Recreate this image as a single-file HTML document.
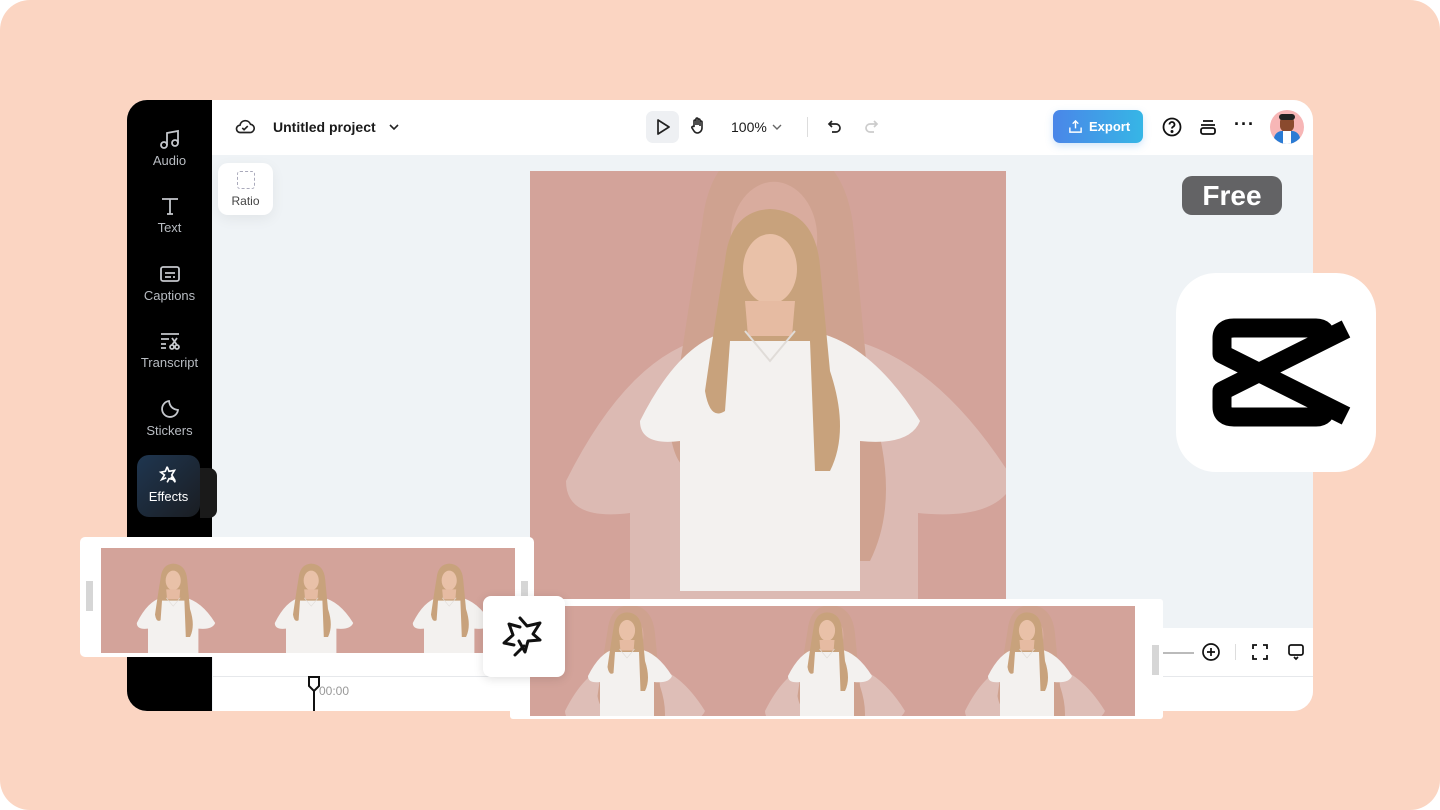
<!DOCTYPE html>
<html><head><meta charset="utf-8"><style>
*{margin:0;padding:0;box-sizing:border-box}
body{width:1440px;height:810px;background:#fff;font-family:"Liberation Sans",sans-serif;overflow:hidden;position:relative}
.bg{position:absolute;left:0;top:0;width:1440px;height:810px;background:#fbd5c2;border-radius:30px}
.abs{position:absolute}
.win{left:127px;top:100px;width:1186px;height:611px;border-radius:20px;background:#eff3f6;overflow:hidden}
.side{left:0;top:0;width:85px;height:611px;background:#000}
.top{left:85px;top:0;width:1101px;height:55px;background:#fff}
.si{position:absolute;left:0;width:85px;text-align:center;color:#b8bcc2;font-size:13px}
.si svg{display:block;margin:0 auto 2px}
</style></head><body>
<div class="bg"></div>
<svg width="0" height="0" style="position:absolute">
<defs>
<g id="fig">
<path d="M110 250 Q150 170 200 160 L280 160 Q340 170 390 250 Q380 275 330 270 L330 420 L150 420 L150 270 Q110 275 110 250Z" fill="#f3f1ef"/>
<path d="M195 90 Q200 40 240 38 Q285 40 290 95 L300 200 Q320 260 300 300 L285 300 L280 170 L200 170 L195 240 Q180 250 175 220 Q185 150 195 90Z" fill="#c8a27c"/>
<ellipse cx="240" cy="98" rx="27" ry="35" fill="#e9c1a8"/>
<path d="M215 130 L265 130 L262 165 L218 165Z" fill="#e6bba2"/>
<path d="M215 160 L240 190 L265 160" fill="none" stroke="#e0dcd8" stroke-width="2"/>
</g>
</defs></svg>

<div class="abs win">
  <div class="abs side">
    <div class="si" style="top:27px"><svg width="24" height="24" viewBox="0 0 24 24" fill="none" stroke="#c4c7cc" stroke-width="1.8"><path d="M9 18V6l11-2v12"/><circle cx="6" cy="18" r="3"/><circle cx="17" cy="16" r="3"/></svg>Audio</div>
    <div class="si" style="top:94px"><svg width="24" height="24" viewBox="0 0 24 24" fill="none" stroke="#c4c7cc" stroke-width="1.8"><path d="M4 5h16M12 5v15M9 20h6"/></svg>Text</div>
    <div class="si" style="top:162px"><svg width="24" height="24" viewBox="0 0 24 24" fill="none" stroke="#c4c7cc" stroke-width="1.8"><rect x="3" y="5" width="18" height="14" rx="2"/><path d="M7 11h10M7 15h6M15 15h2"/></svg>Captions</div>
    <div class="si" style="top:229px"><svg width="24" height="24" viewBox="0 0 24 24" fill="none" stroke="#c4c7cc" stroke-width="1.8"><path d="M3 5h18M3 10h8M3 15h5M3 19h5"/><circle cx="14" cy="18" r="2"/><circle cx="19" cy="18" r="2"/><path d="M14 9l5 7M19 9l-5 7"/></svg>Transcript</div>
    <div class="si" style="top:297px"><svg width="24" height="24" viewBox="0 0 24 24" fill="none" stroke="#c4c7cc" stroke-width="1.8"><path d="M20 13A8 8 0 1 1 11 4Q12 12 20 13Z"/></svg>Stickers</div>
    <div class="abs" style="left:10px;top:355px;width:63px;height:62px;border-radius:12px;background:linear-gradient(135deg,#1f3650,#1a1d22);color:#fff;font-size:13px;text-align:center;padding-top:9px"><svg width="22" height="22" viewBox="0 0 24 24" fill="none" stroke="#fff" stroke-width="1.8" style="display:block;margin:0 auto 3px"><path d="M10 3l2 5 6-1-3 5 3 5-6-1-2 4M10 3L8 8 3 9l4 3-3 5 5-2"/><path d="M14 14l5 6"/></svg>Effects</div>
    <div class="abs" style="left:73px;top:368px;width:17px;height:50px;background:#1a1a1a;border-radius:0 8px 8px 0"></div>
  </div>
  <div class="abs top">
    <svg class="abs" style="left:22px;top:16px" width="22" height="22" viewBox="0 0 24 24" fill="none" stroke="#222" stroke-width="1.8"><path d="M7 18a4 4 0 0 1-.5-8A6 6 0 0 1 18 9a4.5 4.5 0 0 1-1 9Z"/><path d="M9 13l2 2 4-4"/></svg>
    <div class="abs" style="left:61px;top:19px;font-size:14px;font-weight:bold;color:#1a1a1a">Untitled project</div>
    <svg class="abs" style="left:175px;top:20px" width="14" height="14" viewBox="0 0 14 14" fill="none" stroke="#222" stroke-width="1.6"><path d="M3 5l4 4 4-4"/></svg>
    <div class="abs" style="left:434px;top:11px;width:33px;height:32px;border-radius:7px;background:#eef0f3"></div>
    <svg class="abs" style="left:441px;top:17px" width="20" height="20" viewBox="0 0 20 20" fill="none" stroke="#222" stroke-width="1.7"><path d="M5 3l11 7-11 7Z" stroke-linejoin="round"/></svg>
    <svg class="abs" style="left:476px;top:16px" width="20" height="20" viewBox="0 0 20 20" fill="none" stroke="#222" stroke-width="1.6"><path d="M6 11V5a1 1 0 0 1 2 0v4V3a1 1 0 0 1 2 0v6V4a1 1 0 0 1 2 0v6V6a1 1 0 0 1 2 0v6a5 5 0 0 1-5 5H9a4 4 0 0 1-3-2l-2-3a1 1 0 0 1 2-1Z"/></svg>
    <div class="abs" style="left:519px;top:19px;font-size:14px;color:#1a1a1a">100%</div>
    <svg class="abs" style="left:558px;top:20px" width="14" height="14" viewBox="0 0 14 14" fill="none" stroke="#666" stroke-width="1.4"><path d="M3 5l4 4 4-4"/></svg>
    <div class="abs" style="left:595px;top:17px;width:1px;height:20px;background:#ddd"></div>
    <svg class="abs" style="left:613px;top:17px" width="20" height="20" viewBox="0 0 20 20" fill="none" stroke="#222" stroke-width="1.7"><path d="M7 4L4 7l3 3M4 7h7a4 4 0 0 1 0 8H7"/></svg>
    <svg class="abs" style="left:649px;top:17px" width="20" height="20" viewBox="0 0 20 20" fill="none" stroke="#ccc" stroke-width="1.7"><path d="M13 4l3 3-3 3M16 7H9a4 4 0 0 0 0 8h4"/></svg>
    <div class="abs" style="left:841px;top:10px;width:90px;height:33px;border-radius:7px;background:linear-gradient(90deg,#4a86e8,#36b6e6);color:#fff;font-size:13px;font-weight:bold;line-height:33px;padding-left:36px;box-shadow:0 3px 8px rgba(70,150,230,.25)">Export</div>
    <svg class="abs" style="left:856px;top:19px" width="15" height="15" viewBox="0 0 16 16" fill="none" stroke="#fff" stroke-width="1.5"><path d="M8 10V2M5 5l3-3 3 3M2 9v5h12V9"/></svg>
    <svg class="abs" style="left:949px;top:16px" width="22" height="22" viewBox="0 0 22 22" fill="none" stroke="#111" stroke-width="1.8"><circle cx="11" cy="11" r="8.5"/><path d="M8.5 8.5a2.5 2.5 0 1 1 3.5 2.3c-.8.4-1 .9-1 1.7"/><circle cx="11" cy="15.5" r=".6" fill="#111"/></svg>
    <svg class="abs" style="left:985px;top:16px" width="22" height="22" viewBox="0 0 22 22" fill="none" stroke="#111" stroke-width="1.8"><path d="M6 5h10M4 9h14"/><rect x="4" y="12" width="14" height="6" rx="2"/></svg>
    <div class="abs" style="left:1022px;top:14px;font-size:18px;color:#111;letter-spacing:1px;font-weight:bold">···</div>
    <div class="abs" style="left:1058px;top:10px;width:34px;height:34px;border-radius:50%;background:#f7b6b6;overflow:hidden">
      <div class="abs" style="left:10px;top:6px;width:14px;height:16px;border-radius:6px;background:#8a4a2e"></div>
      <div class="abs" style="left:9px;top:4px;width:16px;height:6px;border-radius:4px;background:#222"></div>
      <div class="abs" style="left:4px;top:21px;width:26px;height:16px;border-radius:8px 8px 0 0;background:#2a7bd4"></div>
      <div class="abs" style="left:13px;top:21px;width:8px;height:14px;background:#fff"></div>
    </div>
  </div>
  <div class="abs" style="left:91px;top:63px;width:55px;height:52px;border-radius:10px;background:#fff;box-shadow:0 4px 14px rgba(0,0,0,.06);text-align:center;font-size:12px;color:#444;padding-top:8px">
    <div style="width:18px;height:18px;border:1.5px dashed #aab;border-radius:3px;margin:0 auto 5px"></div>Ratio</div>
  <div class="abs" style="left:1055px;top:76px;width:100px;height:39px;border-radius:10px;background:#636365;color:#fff;font-size:28px;font-weight:bold;text-align:center;line-height:39px">Free</div>
  <svg class="abs" style="left:403px;top:71px" width="476" height="430" viewBox="0 0 476 430">
    <rect width="476" height="430" fill="#d3a39a"/>
    <g opacity=".3" transform="translate(-140,-90) scale(1.6)"><use href="#fig"/></g>
    <use href="#fig"/>
  </svg>
  <div class="abs" style="left:86px;top:528px;width:1100px;height:83px;background:#fff"></div>
  <div class="abs" style="left:86px;top:576px;width:1100px;height:1px;background:#e6e8eb"></div>
  <div class="abs" style="left:1035px;top:552px;width:32px;height:1.5px;background:#bbb"></div>
  <svg class="abs" style="left:1074px;top:542px" width="20" height="20" viewBox="0 0 20 20" fill="none" stroke="#111" stroke-width="1.7"><circle cx="10" cy="10" r="8"/><path d="M10 6v8M6 10h8"/></svg>
  <div class="abs" style="left:1108px;top:544px;width:1px;height:16px;background:#ddd"></div>
  <svg class="abs" style="left:1123px;top:542px" width="20" height="20" viewBox="0 0 20 20" fill="none" stroke="#111" stroke-width="1.8"><path d="M3 7V3h4M13 3h4v4M17 13v4h-4M7 17H3v-4"/></svg>
  <svg class="abs" style="left:1159px;top:542px" width="20" height="20" viewBox="0 0 20 20" fill="none" stroke="#111" stroke-width="1.7"><rect x="3" y="3" width="14" height="10" rx="2"/><path d="M8 15l2 2 2-2"/></svg>
  <div class="abs" style="left:192px;top:584px;font-size:12px;color:#999">00:00</div>
  <svg class="abs" style="left:179px;top:576px" width="16" height="36" viewBox="0 0 16 36" fill="none" stroke="#111" stroke-width="2"><path d="M3 1h10v9l-5 5-5-5Z" fill="#fff"/><path d="M8 15v21"/></svg>
</div>

<div class="abs" style="left:80px;top:537px;width:454px;height:120px;background:#fff;border-radius:5px"></div>
<div class="abs" style="left:86px;top:581px;width:7px;height:30px;background:#d6d6d6"></div>
<div class="abs" style="left:521px;top:581px;width:7px;height:30px;background:#d6d6d6"></div>
<svg class="abs" style="left:101px;top:548px" width="414" height="105" viewBox="0 0 414 105">
  <rect width="414" height="105" fill="#d3a39a"/>
  <g transform="translate(5,5) scale(.28)"><use href="#fig"/></g>
  <g transform="translate(143,5) scale(.28)"><use href="#fig"/></g>
  <g transform="translate(281,5) scale(.28)"><use href="#fig"/></g>
</svg>
<div class="abs" style="left:510px;top:599px;width:653px;height:120px;background:#fff;border-radius:3px"></div>
<div class="abs" style="left:1152px;top:645px;width:7px;height:30px;background:#d6d6d6"></div>
<svg class="abs" style="left:530px;top:606px" width="605" height="110" viewBox="0 0 605 110">
  <rect width="605" height="110" fill="#d3a39a"/>
  <g opacity=".35" transform="translate(-20,-20) scale(.5)"><use href="#fig"/></g>
  <g opacity=".35" transform="translate(180,-20) scale(.5)"><use href="#fig"/></g>
  <g opacity=".35" transform="translate(380,-20) scale(.5)"><use href="#fig"/></g>
  <g transform="translate(25,-5) scale(.3)"><use href="#fig"/></g>
  <g transform="translate(225,-5) scale(.3)"><use href="#fig"/></g>
  <g transform="translate(425,-5) scale(.3)"><use href="#fig"/></g>
</svg>
<div class="abs" style="left:483px;top:596px;width:82px;height:81px;background:#fff;border-radius:8px;box-shadow:0 2px 10px rgba(0,0,0,.12)"></div>
<svg class="abs" style="left:500px;top:612px" width="48" height="48" viewBox="0 0 48 48" fill="none" stroke="#111" stroke-width="3" stroke-linejoin="round" stroke-linecap="round"><path d="M20 6l7 8 13-3-7 11 7 6-12 1-3 11-6-11M14 33l-10-2 9-8-4-11 11 3"/><path d="M24 34l-9 9"/></svg>
<div class="abs" style="left:1176px;top:273px;width:200px;height:199px;background:#fff;border-radius:40px"></div>
<svg class="abs" style="left:1176px;top:273px" width="200" height="199" viewBox="0 0 200 199" fill="none" stroke="#000" stroke-width="19" stroke-linejoin="round">
  <path d="M170 56 L46 118 L46 134 Q46 144 58 144 L140 144 Q150 144 150 134"/>
  <path d="M170 143 L46 81 L46 65 Q46 55 58 55 L140 55 Q150 55 150 65"/>
</svg>
</body></html>
